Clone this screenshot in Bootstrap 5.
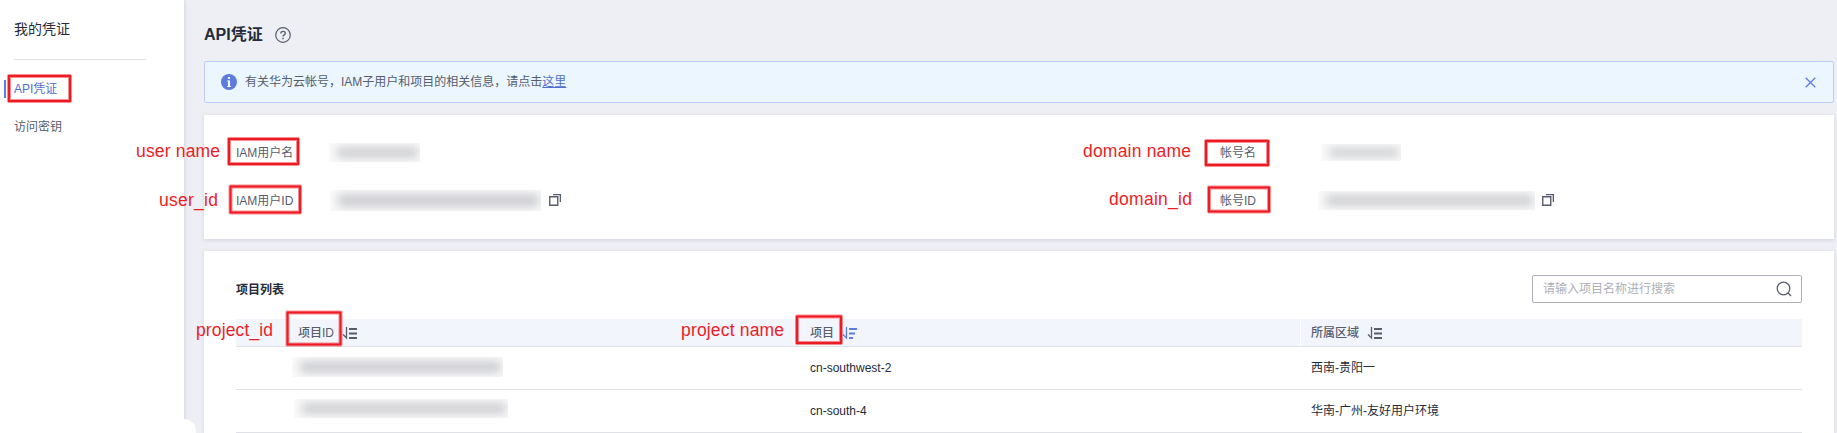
<!DOCTYPE html>
<html lang="zh-CN">
<head>
<meta charset="utf-8">
<meta name="viewport" content="width=device-width, initial-scale=1">
<title>API凭证</title>
<link href="https://cdn.jsdelivr.net/npm/bootstrap@5.3.0/dist/css/bootstrap.min.css" rel="stylesheet">
<style>
  body { font-family: "Liberation Sans", "Noto Sans CJK SC", sans-serif; font-size: 12px; line-height: 18px; color: #252b3a; background: #eeeff5; }
  .app { height: 433px; position: relative; }
  .side { width: 184px; padding: 20px 38px 0 14px; box-shadow: 0 0 4px rgba(60,65,90,.22); position: relative; }
  .side-title { font-size: 14px; line-height: 18px; padding-bottom: 21px; border-bottom: 1px solid #dfe1e6; }
  .side .nav { padding-top: 20px; gap: 20px; }
  .side .nav-link { padding: 0; color: #575d6c; line-height: 18px; }
  .side .nav-link.active { color: #526ecc; box-shadow: -8px 0 0 #fff, -10px 0 0 #5e7ce0; }
  .side-knob { position: absolute; left: 172px; bottom: 0; width: 24px; height: 14px; border-top-right-radius: 12px; }
  .main-col { padding: 20px 3px 0 20px; }
  .page-title { font-size: 16px; line-height: 18px; height: 29px; }
  .help { margin-left: 12px; margin-top: 1px; }
  .tip { height: 42px; padding: 0 17px 0 16px; color: #575d6c; background: #ebf6ff; border: 1px solid #beccfa; border-radius: 2px; margin: 12px 0; }
  .tip a { color: #526ecc; }
  .panel { border: 0; border-radius: 0; box-shadow: 0 1px 4px rgba(60,65,90,.16); }
  .info { height: 124px; margin-bottom: 12px; padding: 22px 32px; }
  .info-row { height: 30px; }
  .info-row + .info-row { margin-top: 18px; }
  .info-half { width: 984px; flex: none; }
  .info-label { width: 98px; color: #575d6c; padding-top: 1px; }
  .info-label.second { width: 101px; }
  .masked { position: relative; overflow: hidden; background: #fafafa; flex: none; }
  .masked::before { content: ""; position: absolute; inset: 4px 2px 4px 8px; background: #cdced2; filter: blur(5px); }
  .mk-a { width: 91px; height: 19px; margin-left: -5px; }
  .mk-b { width: 211px; height: 21px; margin-left: -4px; }
  .mk-c { width: 80px; height: 17px; }
  .mk-d { width: 217px; height: 19px; margin-left: -3px; }
  .mk-e { width: 211px; height: 20px; margin-left: -6px; margin-top: -3px; }
  .mk-f { width: 214px; height: 19px; margin-left: -4px; margin-top: -6px; }
  .icon-copy { margin-left: 7px; }
  .list-panel { height: 182px; padding: 24px 32px 0; }
  .list-title { padding-top: 2px; }
  .search { width: 270px; height: 28px; border: 1px solid #adb0b8; border-radius: 2px; color: #adb0b8; padding: 0 9px 0 10px; }
  .grid-table { margin: 16px 0 0; table-layout: fixed; border-collapse: separate; border-spacing: 0; color: #252b3a; font-size: 12px; line-height: 18px; border-color: #dfe1e6; }
  .grid-table > thead th { background: #f2f5fc; color: #575d6c; height: 28px; padding: 0 0 0 10px; font-weight: 500; vertical-align: middle; border-bottom: 1px solid #dfe1e6; }
  .grid-table > thead th:last-child { border-left: 1px solid #fff; }
  .grid-table > tbody td { height: 43px; padding: 0 0 0 10px; vertical-align: middle; border-bottom: 1px solid #dfe1e6; }
  .grid-table > tbody td:last-child { padding-left: 11px; }
  .icon-sorted { margin-left: 8px; color: #5e7ce0; }
  svg { display: block; flex: none; }
  .notes { position: absolute; left: 0; top: 0; pointer-events: none; }
  .notes text { font-family: "Liberation Sans", sans-serif; font-size: 17.5px; fill: #ed1c24; }
</style>
</head>
<body>
<svg width="0" height="0" class="position-absolute">
  <symbol id="copy" viewBox="0 0 12 12"><path d="M.75 2.75h8v8.500h-8zM4 .6h7.400v7.400" fill="none" stroke="#575d6c" stroke-width="1.400"/></symbol>
  <symbol id="sort" viewBox="0 0 16 14"><path d="M4.500 1v11L1 8.500" fill="none" stroke="currentColor" stroke-width="1.300"/><path d="M7 2h8v2H7zM7 6.500h8v2H7zM7 11h8v2H7z" fill="currentColor"/></symbol>
</svg>
<div class="app d-flex overflow-hidden">
  <aside class="side bg-white flex-shrink-0">
    <div class="side-title">我的凭证</div>
    <nav class="nav flex-column">
      <a class="nav-link active" href="#">API凭证</a>
      <a class="nav-link" href="#">访问密钥</a>
    </nav>
    <span class="side-knob bg-white"></span>
  </aside>
  <main class="main-col flex-grow-1">
    <div class="page-title d-flex align-items-center fw-bold">API凭证
      <svg class="help" width="16" height="16" viewBox="0 0 16 16" fill="none" stroke="#575d6c"><circle cx="8" cy="8" r="7.300" stroke-width="1.200"/><path d="M5.800 6.500C5.800 3.600 10.300 3.700 10.300 6.300 10.300 8 8 7.800 8 9.600" stroke-width="1.300"/><path d="M8 10.800v1.400" stroke-width="1.400"/></svg>
    </div>
    <div class="tip d-flex align-items-center">
      <svg class="me-2" width="16" height="16" viewBox="0 0 16 16"><circle cx="8" cy="8" r="8" fill="#5e7ce0"/><path d="M7 3h2v2H7zM6.200 6.500H9V12h.8v1H6.200v-1H7V7.500h-.8z" fill="#fff"/></svg>
      <span>有关华为云帐号，IAM子用户和项目的相关信息，请点击<a href="#">这里</a></span>
      <svg class="ms-auto" width="11" height="11" viewBox="0 0 11 11"><path d="M.7.7l9.600 9.600M10.300.7L.7 10.300" stroke="#5e7ce0" stroke-width="1.300"/></svg>
    </div>
    <section class="card panel info">
      <div class="info-row d-flex">
        <div class="info-half d-flex align-items-center"><span class="info-label">IAM用户名</span><span class="masked mk-a"></span></div>
        <div class="d-flex align-items-center"><span class="info-label second">帐号名</span><span class="masked mk-c"></span></div>
      </div>
      <div class="info-row d-flex">
        <div class="info-half d-flex align-items-center"><span class="info-label">IAM用户ID</span><span class="masked mk-b"></span><svg class="ms-2" width="12" height="12"><use href="#copy"/></svg></div>
        <div class="d-flex align-items-center"><span class="info-label second">帐号ID</span><span class="masked mk-d"></span><svg class="icon-copy" width="12" height="12"><use href="#copy"/></svg></div>
      </div>
    </section>
    <section class="card panel list-panel">
      <div class="d-flex align-items-center justify-content-between">
        <span class="list-title fw-bold">项目列表</span>
        <div class="search d-flex align-items-center justify-content-between">请输入项目名称进行搜索
          <svg width="16" height="16" viewBox="0 0 16 16" fill="none" stroke="#575d6c" stroke-width="1.300"><circle cx="7.500" cy="7.500" r="6.300"/><path d="M12 12l3 3"/></svg>
        </div>
      </div>
      <table class="table grid-table">
        <colgroup><col style="width:52px"><col style="width:512px"><col style="width:500px"><col></colgroup>
        <thead><tr>
          <th></th>
          <th><span class="d-flex align-items-center">项目ID<svg class="ms-2" width="16" height="14"><use href="#sort"/></svg></span></th>
          <th><span class="d-flex align-items-center">项目<svg class="icon-sorted" width="16" height="14" viewBox="0 0 16 14"><path d="M4.500 1v11L1 8.500" fill="none" stroke="currentColor" stroke-width="1.300"/><path d="M7 2h8v2H7zM7 6.500h6v2H7zM7 11h4v2H7z" fill="currentColor"/></svg></span></th>
          <th><span class="d-flex align-items-center">所属区域<svg class="ms-2" width="16" height="14"><use href="#sort"/></svg></span></th>
        </tr></thead>
        <tbody>
          <tr><td></td><td><div class="masked mk-e"></div></td><td>cn-southwest-2</td><td>西南-贵阳一</td></tr>
          <tr><td></td><td><div class="masked mk-f"></div></td><td>cn-south-4</td><td>华南-广州-友好用户环境</td></tr>
        </tbody>
      </table>
    </section>
  </main>
  <!-- red callouts that name the API field of each label -->
  <svg class="notes" width="1837" height="433">
    <g fill="none" stroke="#ed1c24" stroke-opacity=".5" stroke-width="4" stroke-linejoin="round">
      <path d="M9 76h61v25H9zM229 139h69v25h-69zM230.500 186.500h69.500v26h-69.500zM1206 141h62v24h-62zM1209 187.500h60v24h-60zM287.500 312.500h53v32h-53zM797 316.500h44v26.500h-44z"/>
    </g>
    <g fill="none" stroke="#ed1c24" stroke-width="2">
      <path d="M9 76h61v25H9zM229 139h69v25h-69zM230.500 186.500h69.500v26h-69.500zM1206 141h62v24h-62zM1209 187.500h60v24h-60zM287.500 312.500h53v32h-53zM797 316.500h44v26.500h-44z"/>
    </g>
    <text x="136" y="157" textLength="84">user name</text>
    <text x="159" y="206" textLength="59">user_id</text>
    <text x="1083" y="157" textLength="108">domain name</text>
    <text x="1109" y="205" textLength="83">domain_id</text>
    <text x="196" y="336" textLength="77">project_id</text>
    <text x="681" y="336" textLength="103">project name</text>
  </svg>
</div>
<script src="https://cdn.jsdelivr.net/npm/bootstrap@5.3.0/dist/js/bootstrap.bundle.min.js"></script>
</body>
</html>
